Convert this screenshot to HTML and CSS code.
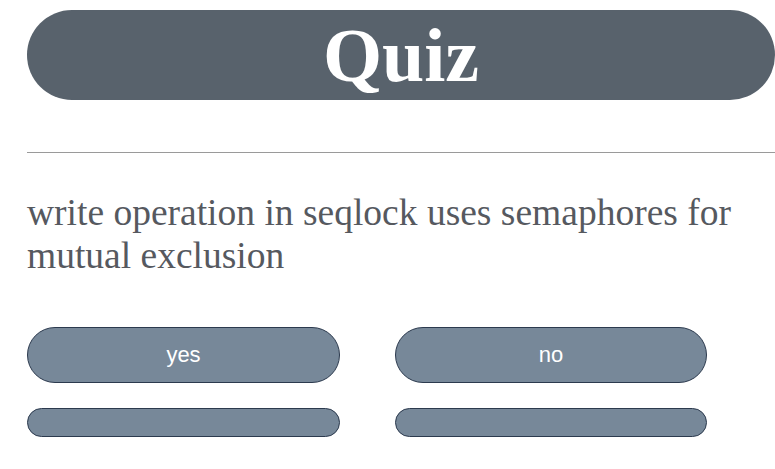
FILE: index.html
```html
<!DOCTYPE html>
<html>
<head>
<meta charset="utf-8">
<link rel="stylesheet" href="styles.css">
</head>
<body>
<div class="page">
  <h1 class="title">Quiz</h1>
  <hr class="rule">
  <p class="question">write operation in seqlock uses semaphores for mutual exclusion</p>
  <div class="answers">
    <button class="answer">yes</button>
    <button class="answer">no</button>
    <button class="answer small"></button>
    <button class="answer small"></button>
  </div>
</div>
</body>
</html>
```
FILE: styles.css
```css
html, body {
  margin: 0;
  padding: 0;
  background: #ffffff;
  overflow: hidden;
}
.page {
  padding: 10px 0 0 27px;
}
.title {
  margin: 0;
  height: 90px;
  border-radius: 45px;
  background: #58626c;
  color: #ffffff;
  font-family: "Liberation Serif", serif;
  font-weight: bold;
  font-size: 76px;
  line-height: 90px;
  text-align: center;
}
.rule {
  margin: 52px 0 0 0;
  border: 0;
  border-top: 1px solid #9a9a9a;
  height: 0;
}
.question {
  margin: 38px 0 0 0;
  font-family: "Liberation Serif", serif;
  font-size: 37.5px;
  line-height: 43px;
  color: #56595f;
  width: 730px;
}
.answers {
  margin-top: 50px;
  display: grid;
  grid-template-columns: 313px 312px;
  column-gap: 55px;
  row-gap: 25px;
}
.answer {
  height: 56px;
  border: 1px solid #2c3a4e;
  border-radius: 28px;
  background: #778899;
  color: #ffffff;
  font-family: "Liberation Sans", Arial, sans-serif;
  font-size: 22px;
  padding: 0;
}
.answer.small {
  height: 29px;
  border-radius: 15px;
}
```
